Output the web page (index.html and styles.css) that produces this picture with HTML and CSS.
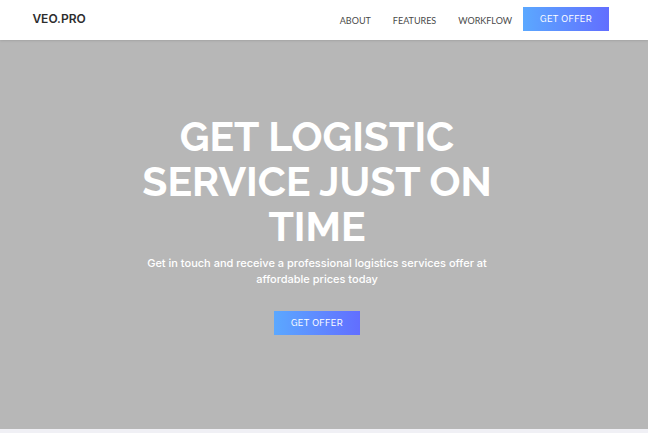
FILE: index.html
```html
<!DOCTYPE html>
<html lang="en">
<head>
<meta charset="utf-8">
<meta name="viewport" content="width=device-width, initial-scale=1">
<title>VEO.PRO</title>
<link rel="stylesheet" href="styles.css">
</head>
<body>
<header class="header">
  <a class="brand" href="#top">VEO.PRO</a>
  <nav class="nav">
    <a class="nav-link" href="#about">ABOUT</a>
    <a class="nav-link" href="#features">FEATURES</a>
    <a class="nav-link" href="#workflow">WORKFLOW</a>
  </nav>
  <button class="button" type="button">GET OFFER</button>
</header>
<main class="hero" id="top">
  <div class="hero-content">
    <h1 class="title">GET LOGISTIC SERVICE JUST ON TIME</h1>
    <p class="lead">Get in touch and receive a professional logistics services offer at affordable prices today</p>
    <button class="button" type="button">GET OFFER</button>
  </div>
</main>
</body>
</html>
```
FILE: styles.css
```css
* {
  box-sizing: border-box;
}

body {
  margin: 0;
  min-height: 100vh;
  display: flex;
  flex-direction: column;
  background: #f0f0f5;
  font-family: Lato, sans-serif;
}

.header {
  display: flex;
  align-items: center;
  height: 40px;
  padding: 0 6% 2px 5%;
  background: #fff;
  box-shadow: 0 0 3px rgba(0, 0, 0, 0.2);
  z-index: 1;
}

.brand {
  color: #2d2d2d;
  font: 600 12px/16px Inter, sans-serif;
  text-decoration: none;
}

.nav {
  display: flex;
  gap: 22px;
  margin: 3px 11px 0 auto;
}

.nav-link {
  color: #4a4a4a;
  font-size: 9px;
  line-height: 16px;
  text-decoration: none;
}

.button {
  width: 86px;
  height: 24px;
  padding: 0;
  border: 0;
  background: linear-gradient(90deg, #5ba8ff, #626eff);
  color: #fff;
  font: 500 9px/16px Raleway, Lato, sans-serif;
  letter-spacing: 0.05em;
}

.hero {
  flex: 1;
  display: flex;
  justify-content: center;
  margin-bottom: 4px;
  padding: 74px 14px 40px 0;
  background: #b7b7b7;
}

.hero-content {
  max-width: 376px;
  color: #fff;
  text-align: center;
}

.title {
  margin: 0;
  font: 700 41px/45px Raleway, Lato, sans-serif;
}

.lead {
  margin: 6px 0 23px;
  font: 500 11px/16px Inter, sans-serif;
}
```
